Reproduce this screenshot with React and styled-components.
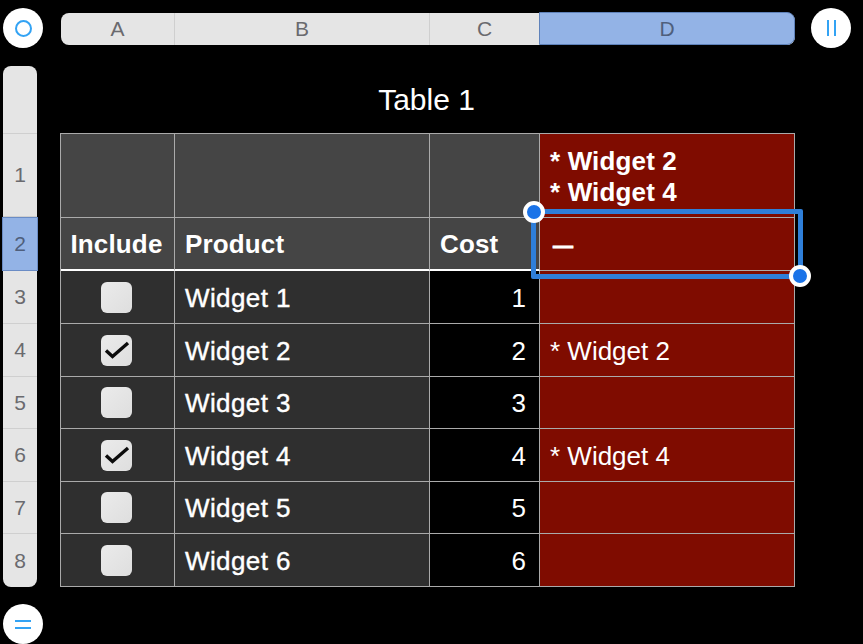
import React from "react";
import styled, { createGlobalStyle } from "styled-components";

const rows = [
  { name: "Widget 1", cost: 1, checked: false, height: 53 },
  { name: "Widget 2", cost: 2, checked: true, height: 53 },
  { name: "Widget 3", cost: 3, checked: false, height: 52 },
  { name: "Widget 4", cost: 4, checked: true, height: 53 },
  { name: "Widget 5", cost: 5, checked: false, height: 52 },
  { name: "Widget 6", cost: 6, checked: false, height: 53 },
];

const columnHeads = [
  { label: "A", width: 114 },
  { label: "B", width: 255 },
  { label: "C", width: 110 },
  { label: "D", width: 256, selected: true },
];

const rowHeads = [
  { label: "", height: 68 },
  { label: "1", height: 83 },
  { label: "2", height: 54, selected: true },
  { label: "3", height: 53 },
  { label: "4", height: 53 },
  { label: "5", height: 52 },
  { label: "6", height: 53 },
  { label: "7", height: 52 },
  { label: "8", height: 53 },
];

const App = () => {
  return (
    <Page>
      <GlobalStyle />
      <TopBar>
        <RoundButton>
          <RingIcon />
        </RoundButton>
        <ColumnBar>
          {columnHeads.map((col) => (
            <ColumnHead key={col.label} $width={col.width} $selected={col.selected}>
              {col.label}
            </ColumnHead>
          ))}
        </ColumnBar>
        <RoundButton>
          <BarsIcon $vertical />
        </RoundButton>
      </TopBar>

      <Body>
        <Side>
          <RowBar>
            {rowHeads.map((row, i) => (
              <RowHead key={i} $height={row.height} $selected={row.selected}>
                {row.label}
              </RowHead>
            ))}
          </RowBar>
          <RoundButton>
            <BarsIcon />
          </RoundButton>
        </Side>

        <Sheet>
          <Title>Table 1</Title>
          <Table>
            <Cell $tone="head" $height={84} />
            <Cell $tone="head" />
            <Cell $tone="head" />
            <Cell $tone="red" $bold $stack>
              <span>* Widget 2</span>
              <span>* Widget 4</span>
            </Cell>

            <Cell $tone="head" $height={53} $thick $bold $center>
              Include
            </Cell>
            <Cell $tone="head" $thick $bold>
              Product
            </Cell>
            <Cell $tone="head" $thick $bold>
              Cost
            </Cell>
            <Cell $tone="red" $bold $raised>
              <Dash>—</Dash>
              <Selection>
                <Handle $corner="start" />
                <Handle $corner="end" />
              </Selection>
            </Cell>

            {rows.map((row) => (
              <React.Fragment key={row.name}>
                <Cell $tone="body" $height={row.height} $center>
                  <Checkbox>
                    {row.checked && (
                      <svg width="31" height="31" viewBox="0 0 31 31" fill="none">
                        <path
                          d="M5 15.5 L11.5 21.5 L27 8"
                          stroke="#0c0c0c"
                          strokeWidth="3.4"
                        />
                      </svg>
                    )}
                  </Checkbox>
                </Cell>
                <Cell $tone="body" $medium>
                  {row.name}
                </Cell>
                <Cell $tone="black" $right>
                  {row.cost}
                </Cell>
                <Cell $tone="red">{row.checked ? `* ${row.name}` : ""}</Cell>
              </React.Fragment>
            ))}
          </Table>
        </Sheet>
      </Body>
    </Page>
  );
};

const GlobalStyle = createGlobalStyle`
  html, body {
    margin: 0;
    background: #000;
  }
  * {
    box-sizing: border-box;
  }
`;

const tones = {
  head: "#454545",
  body: "#2f2f2f",
  black: "#000",
  red: "#7f0c00",
};

const Page = styled.div`
  width: 863px;
  height: 644px;
  overflow: hidden;
  background: #000;
  font-family: "Liberation Sans", Arial, sans-serif;
  padding: 8px 0 0 3px;
`;

const TopBar = styled.div`
  display: flex;
  align-items: center;
  height: 40px;
`;

const RoundButton = styled.div`
  width: 40px;
  height: 40px;
  flex: none;
  border-radius: 50%;
  background: #fff;
  display: flex;
  align-items: center;
  justify-content: center;
`;

const RingIcon = styled.div`
  width: 17px;
  height: 17px;
  border-radius: 50%;
  border: 2px solid #33a3f4;
`;

const BarsIcon = styled.div`
  width: ${(p) => (p.$vertical ? "9px" : "16px")};
  height: ${(p) => (p.$vertical ? "16px" : "9px")};
  ${(p) =>
    p.$vertical
      ? "border-left: 2px solid #33a3f4; border-right: 2px solid #33a3f4;"
      : "border-top: 2px solid #33a3f4; border-bottom: 2px solid #33a3f4;"}
`;

const ColumnBar = styled.div`
  display: flex;
  margin: 2px 16px 0 18px;
  height: 32px;
  border-radius: 8px;
  background: #e5e5e5;
`;

const ColumnHead = styled.div`
  width: ${(p) => p.$width}px;
  display: flex;
  align-items: center;
  justify-content: center;
  font-size: 21px;
  color: ${(p) => (p.$selected ? "#4f5f7c" : "#6a6a6e")};
  background: ${(p) => (p.$selected ? "#93b3e6" : "transparent")};
  border-right: 1px solid #cfcfcf;
  ${(p) =>
    p.$selected &&
    `
    border: 1px solid #5f82ba;
    border-radius: 0 8px 8px 0;
    height: 33px;
    margin: -1px 0 0 -1px;
  `}
  &:first-child {
    border-radius: 8px 0 0 8px;
  }
`;

const Body = styled.div`
  display: flex;
  margin-top: 18px;
`;

const Side = styled.div`
  display: flex;
  flex-direction: column;
  gap: 17px;
  flex: none;
`;

const RowBar = styled.div`
  width: 34px;
  height: 521px;
  background: #e5e5e5;
  border-radius: 8px;
  display: flex;
  flex-direction: column;
`;

const RowHead = styled.div`
  height: ${(p) => p.$height}px;
  flex: none;
  display: flex;
  align-items: center;
  justify-content: center;
  font-size: 21px;
  color: ${(p) => (p.$selected ? "#4f5f7c" : "#6a6a6e")};
  border-bottom: 1px solid #cfcfcf;
  &:last-child {
    border-bottom: none;
  }
  ${(p) =>
    p.$selected &&
    `
    background: #93b3e6;
    border: 1px solid #6a8cc5;
    width: 36px;
    margin-left: -1px;
  `}
`;

const Sheet = styled.div`
  padding-left: 17px;
  flex: none;
`;

const Title = styled.div`
  height: 67px;
  width: 733px;
  text-align: center;
  color: #fff;
  font-size: 30px;
  padding-top: 18px;
  line-height: 32px;
`;

const Table = styled.div`
  display: grid;
  grid-template-columns: 114px 255px 110px 255px;
  width: 735px;
  border-top: 1px solid #aaa;
  border-left: 1px solid #aaa;
`;

const Cell = styled.div`
  position: relative;
  ${(p) => p.$raised && "z-index: 2;"}
  ${(p) => p.$height && `height: ${p.$height}px;`}
  background: ${(p) => tones[p.$tone]};
  border-right: 1px solid #aaa;
  border-bottom: ${(p) => (p.$thick ? "2px solid #fff" : "1px solid #aaa")};
  color: #fff;
  font-size: 26px;
  font-weight: ${(p) => (p.$bold ? 700 : 400)};
  ${(p) => p.$bold && "letter-spacing: 0.15px;"}
  ${(p) => p.$medium && "letter-spacing: 0.4px; -webkit-text-stroke: 0.4px #fff;"}
  display: flex;
  flex-direction: ${(p) => (p.$stack ? "column" : "row")};
  align-items: ${(p) => (p.$stack ? "flex-start" : "center")};
  justify-content: ${(p) => (p.$center ? "center" : p.$right ? "flex-end" : p.$stack ? "center" : "flex-start")};
  padding: 2px ${(p) => (p.$right ? "13px" : p.$center ? "11px" : "10px")} 0 ${(p) => (p.$center ? "9px" : "10px")};
  line-height: 31px;
`;

const Dash = styled.span`
  font-size: 20px;
  margin: 0 0 0 3px;
  -webkit-text-stroke: 0.8px #fff;
`;

const Checkbox = styled.div`
  width: 31px;
  height: 31px;
  margin-top: -2px;
  border-radius: 6px;
  background: linear-gradient(135deg, #ebebeb, #dedede);
`;

const Selection = styled.div`
  position: absolute;
  left: -9px;
  top: -9px;
  width: 272px;
  height: 70px;
  border: 5px solid #2f7fd9;
  border-radius: 2px;
`;

const Handle = styled.div`
  position: absolute;
  width: 22px;
  height: 22px;
  border-radius: 50%;
  background: #1a73e8;
  border: 4px solid #fff;
  ${(p) =>
    p.$corner === "start"
      ? "left: -13px; top: -13px;"
      : "right: -13px; bottom: -13px;"}
`;

export default App;
